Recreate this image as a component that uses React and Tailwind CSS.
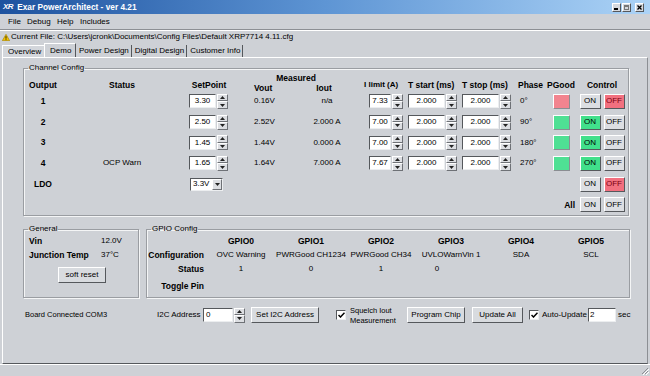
import React from "react";

const rows = [
  { n: "1", status: "", sp: "3.30", vout: "0.16V", iout: "n/a", il: "7.33", ts: "2.000", tp: "2.000", ph: "0°", pg: "bad", ctl: "off" },
  { n: "2", status: "", sp: "2.50", vout: "2.52V", iout: "2.000 A", il: "7.00", ts: "2.000", tp: "2.000", ph: "90°", pg: "good", ctl: "on" },
  { n: "3", status: "", sp: "1.45", vout: "1.44V", iout: "0.000 A", il: "7.00", ts: "2.000", tp: "2.000", ph: "180°", pg: "good", ctl: "on" },
  { n: "4", status: "OCP Warn", sp: "1.65", vout: "1.64V", iout: "7.000 A", il: "7.67", ts: "2.000", tp: "2.000", ph: "270°", pg: "good", ctl: "on" },
];

const gpio = [
  { h: "GPIO0", c: "OVC Warning", s: "1" },
  { h: "GPIO1", c: "PWRGood CH1234", s: "0" },
  { h: "GPIO2", c: "PWRGood CH34", s: "1" },
  { h: "GPIO3", c: "UVLOWarnVin 1", s: "0" },
  { h: "GPIO4", c: "SDA", s: "" },
  { h: "GPIO5", c: "SCL", s: "" },
];

function SpinBtn({ up }) {
  return (
    <div className="flex-1 flex items-center justify-center bg-[#dcdee2] border border-t-white border-l-white border-r-[#6e7176] border-b-[#6e7176]">
      <svg width="5" height="3" viewBox="0 0 5 3">
        <path d={up ? "M0 3 L2.5 0 L5 3Z" : "M0 0 L2.5 3 L5 0Z"} fill="#222" />
      </svg>
    </div>
  );
}

function Spinner() {
  return (
    <div className="flex flex-col w-[11px] h-[15px]">
      <SpinBtn up />
      <SpinBtn />
    </div>
  );
}

function Spin({ value, w }) {
  return (
    <div className="flex items-center gap-[1px]">
      <div className={`${w} h-[14px] bg-white border border-t-[#55585c] border-l-[#55585c] border-b-[#eceef0] border-r-[#eceef0] flex items-center justify-center`}>
        {value}
      </div>
      <Spinner />
    </div>
  );
}

function Btn({ children, tone }) {
  const bg =
    tone === "on"
      ? "bg-[#41e08b]"
      : tone === "off"
      ? "bg-[#f2707f] text-[#7a0010]"
      : "bg-[#dcdee2]";
  return (
    <button className={`w-[21px] h-[15px] flex items-center justify-center border border-t-white border-l-white border-r-[#55585c] border-b-[#55585c] leading-none ${bg}`}>
      {children}
    </button>
  );
}

function PGood({ ok }) {
  return (
    <div
      className={`w-[17px] h-[15px] border border-t-white border-l-white border-r-[#8a8d92] border-b-[#8a8d92] ${
        ok ? "bg-[#4fe094]" : "bg-[#f2848f]"
      }`}
    />
  );
}

function Check() {
  return (
    <div className="w-[10px] h-[10px] bg-white border border-t-[#55585c] border-l-[#55585c] border-b-[#eceef0] border-r-[#eceef0] flex items-center justify-center">
      <svg width="7" height="6" viewBox="0 0 7 6">
        <path d="M0.5 3 L2.5 5 L6.5 0.8" stroke="#000" strokeWidth="1.5" fill="none" />
      </svg>
    </div>
  );
}

function WinBtn({ children }) {
  return (
    <div className="w-[9px] h-[9px] bg-[#d6d9de] border border-t-white border-l-white border-r-[#55585c] border-b-[#55585c] flex items-center justify-center">
      {children}
    </div>
  );
}

function PushButton({ w, children }) {
  return (
    <button className={`${w} h-[16px] bg-[#d8dbdf] border border-t-white border-l-white border-r-[#55585c] border-b-[#55585c] flex items-center justify-center leading-none`}>
      {children}
    </button>
  );
}

const head = "self-end mb-[1px] leading-[10px] font-bold text-[8.5px]";

export default function App() {
  return (
    <div className="w-[650px] h-[376px] overflow-hidden bg-[#ced1d6] flex flex-col text-[8px] leading-none text-black whitespace-nowrap font-['Liberation_Sans',Arial,sans-serif]">
      {/* title bar */}
      <div className="h-[14px] shrink-0 flex items-center bg-gradient-to-r from-[#1d529f] via-[#5e95d4] to-[#acd3f6] pl-[3px] pr-[6px]">
        <span className="text-white font-bold italic text-[8px] tracking-[-0.5px]">XR</span>
        <span className="ml-[4px] text-white font-bold text-[8.3px]">Exar PowerArchitect - ver 4.21</span>
        <div className="ml-auto flex gap-[1px]">
          <WinBtn>
            <div className="w-[4px] h-[1.5px] bg-black mt-[4px] -ml-[1px]" />
          </WinBtn>
          <WinBtn>
            <div className="w-[5px] h-[5px] border border-[#777] border-t-2" />
          </WinBtn>
          <div className="w-[2px]" />
          <WinBtn>
            <svg width="5" height="5" viewBox="0 0 5 5">
              <path d="M0.5 0.5 L4.5 4.5 M4.5 0.5 L0.5 4.5" stroke="#000" strokeWidth="1.3" />
            </svg>
          </WinBtn>
        </div>
      </div>

      {/* menu */}
      <div className="h-[15px] shrink-0 flex items-center pl-[8px]">
        <span className="w-[19px]">File</span>
        <span className="w-[30px]">Debug</span>
        <span className="w-[23px]">Help</span>
        <span>Includes</span>
      </div>
      <div className="h-[2px] shrink-0 border-t border-t-[#8c8f94] border-b border-b-white" />

      {/* current file */}
      <div className="h-[12px] shrink-0 flex items-center pl-[2px]">
        <svg width="8" height="7" viewBox="0 0 8 7">
          <path d="M4 0.3 L7.7 6.7 L0.3 6.7Z" fill="#f5c400" stroke="#9a7a00" strokeWidth="0.6" />
          <rect x="3.6" y="2.2" width="0.8" height="2.5" fill="#000" />
          <rect x="3.6" y="5.3" width="0.8" height="0.8" fill="#000" />
        </svg>
        <span className="ml-[1px]">Current File: C:\Users\jcronk\Documents\Config Files\Default XRP7714 4.11.cfg</span>
      </div>

      {/* tabs */}
      <div className="h-[14px] shrink-0 flex items-end pl-[2px]">
        <div className="w-[42px] h-[12px] flex items-center pl-[5px] border-t border-l border-white bg-[#d3d6db]">Overview</div>
        <div className="w-[32px] h-[14px] flex items-center pl-[5px] border-t border-l border-white border-r border-r-[#55585c] bg-[#ced1d6]">Demo</div>
        <div className="h-[12px] flex items-center pl-[3px] pr-[2px] border-r border-r-[#55585c]">Power Design</div>
        <div className="h-[12px] flex items-center pl-[3px] pr-[2px] border-r border-r-[#55585c]">Digital Design</div>
        <div className="h-[12px] flex items-center pl-[3px] pr-[2px] border-r border-r-[#55585c]">Customer Info</div>
      </div>

      {/* tab panel */}
      <div className="flex-1 mx-[2px] border border-t-white border-l-white border-r-[#8c8f94] border-b-[#55585c] flex flex-col pl-[20px]">
        {/* channel config */}
        <fieldset className="mt-[5px] w-[606px] border border-[#9a9da2] shadow-[inset_1px_1px_0_#f4f5f6,1px_1px_0_#f4f5f6]">
          <legend className="ml-[4px] px-[1px] leading-[10px]">Channel Config</legend>
          <div className="grid grid-cols-[38px_120px_54px_60px_60px_50px_54px_54px_32px_30px_52px] grid-rows-[18px_repeat(6,20.7px)] items-center">
            <div className={`${head} text-center`}>Output</div>
            <div className={`${head} text-center`}>Status</div>
            <div className={`${head} text-center`}>SetPoint</div>
            <div className="col-span-2 self-stretch flex flex-col font-bold text-[8.5px]">
              <div className="leading-[10px] text-center">Measured</div>
              <div className="flex mt-[1px] leading-[9px]">
                <span className="w-[60px] pl-[18px]">Vout</span>
                <span className="w-[60px] text-center pr-[4px]">Iout</span>
              </div>
            </div>
            <div className={`${head} pl-[8px] text-[8px]`}>I limit (A)</div>
            <div className={`${head} pl-[2px]`}>T start (ms)</div>
            <div className={`${head} pl-[2px]`}>T stop (ms)</div>
            <div className={`${head} pl-[4px]`}>Phase</div>
            <div className={`${head} text-center`}>PGood</div>
            <div className={`${head} text-center`}>Control</div>

            {rows.map((r) => (
              <React.Fragment key={r.n}>
                <div className="text-center font-bold text-[8.5px]">{r.n}</div>
                <div className="text-center">{r.status}</div>
                <div className="pl-[7px]">
                  <Spin value={r.sp} w="w-[27px]" />
                </div>
                <div className="pl-[18px]">{r.vout}</div>
                <div className="text-center pl-[2px]">{r.iout}</div>
                <div className="pl-[13px]">
                  <Spin value={r.il} w="w-[22px]" />
                </div>
                <div className="pl-[2px]">
                  <Spin value={r.ts} w="w-[37px]" />
                </div>
                <div className="pl-[2px]">
                  <Spin value={r.tp} w="w-[37px]" />
                </div>
                <div className="pl-[6px]">{r.ph}</div>
                <div className="flex justify-center">
                  <PGood ok={r.pg === "good"} />
                </div>
                <div className="flex justify-center gap-[3px]">
                  <Btn tone={r.ctl === "on" ? "on" : ""}>ON</Btn>
                  <Btn tone={r.ctl === "off" ? "off" : ""}>OFF</Btn>
                </div>
              </React.Fragment>
            ))}

            {/* LDO */}
            <div className="text-center font-bold text-[8.5px]">LDO</div>
            <div />
            <div className="pl-[8px]">
              <div className="w-[33px] h-[13px] bg-white border border-t-[#55585c] border-l-[#55585c] border-b-[#eceef0] border-r-[#eceef0] flex items-center">
                <span className="pl-[2px] flex-1">3.3V</span>
                <div className="w-[10px] h-[11px] bg-[#dcdee2] border border-t-white border-l-white border-r-[#6e7176] border-b-[#6e7176] flex items-center justify-center">
                  <svg width="5" height="3" viewBox="0 0 5 3">
                    <path d="M0 0 L2.5 3 L5 0Z" fill="#222" />
                  </svg>
                </div>
              </div>
            </div>
            <div className="col-span-7" />
            <div className="flex justify-center gap-[3px]">
              <Btn>ON</Btn>
              <Btn tone="off">OFF</Btn>
            </div>

            {/* All */}
            <div className="col-span-9" />
            <div className="text-right pr-[1px] font-bold text-[8.5px]">All</div>
            <div className="flex justify-center gap-[3px]">
              <Btn>ON</Btn>
              <Btn>OFF</Btn>
            </div>
          </div>
        </fieldset>

        <div className="flex gap-[7px] mt-[8px]">
          {/* general */}
          <fieldset className="w-[116px] h-[74px] border border-[#9a9da2] shadow-[inset_1px_1px_0_#f4f5f6,1px_1px_0_#f4f5f6] pl-[5px]">
            <legend className="ml-[-1px] px-[1px] leading-[10px]">General</legend>
            <div className="h-[14px] flex items-center">
              <span className="w-[72px] font-bold text-[8.5px]">Vin</span>
              <span>12.0V</span>
            </div>
            <div className="h-[14px] flex items-center">
              <span className="w-[72px] font-bold text-[8.5px]">Junction Temp</span>
              <span>37°C</span>
            </div>
            <div className="mt-[5px] pl-[29px]">
              <PushButton w="w-[48px]">soft reset</PushButton>
            </div>
          </fieldset>

          {/* gpio */}
          <fieldset className="w-[484px] h-[74px] border border-[#9a9da2] shadow-[inset_1px_1px_0_#f4f5f6,1px_1px_0_#f4f5f6]">
            <legend className="ml-[4px] px-[1px] leading-[10px]">GPIO Config</legend>
            <div className="grid grid-cols-[59px_repeat(6,70px)] grid-rows-[14px_14px_14px_20px] items-center">
              <div />
              {gpio.map((g) => (
                <div key={g.h} className="text-center font-bold text-[8.5px]">{g.h}</div>
              ))}
              <div className="text-right pr-[2px] font-bold text-[8.5px]">Configuration</div>
              {gpio.map((g) => (
                <div key={g.h} className="text-center">{g.c}</div>
              ))}
              <div className="text-right pr-[2px] font-bold text-[8.5px]">Status</div>
              {gpio.map((g, i) => (
                <div key={g.h} className={i === 3 ? "text-center pr-[28px]" : "text-center"}>{g.s}</div>
              ))}
              <div className="text-right pr-[2px] font-bold text-[8.5px]">Toggle Pin</div>
            </div>
          </fieldset>
        </div>

        {/* bottom controls */}
        <div className="mt-[7px] h-[20px] flex items-center">
          <span className="w-[134px] pl-[2px] text-[7.5px]">Board Connected COM3</span>
          <span className="w-[46px]">I2C Address</span>
          <div className="w-[30px] h-[14px] bg-white border border-t-[#55585c] border-l-[#55585c] border-b-[#eceef0] border-r-[#eceef0] flex items-center pl-[2px]">0</div>
          <div className="ml-[1px]">
            <Spinner />
          </div>
          <div className="ml-[6px]">
            <PushButton w="w-[68px]">Set I2C Address</PushButton>
          </div>
          <div className="ml-[17px]">
            <Check />
          </div>
          <div className="ml-[4px] w-[54px] flex flex-col gap-[1px] text-[7.5px] leading-[9px]">
            <span>Squelch Iout</span>
            <span>Measurement</span>
          </div>
          <div className="ml-[3px]">
            <PushButton w="w-[58px]">Program Chip</PushButton>
          </div>
          <div className="ml-[7px]">
            <PushButton w="w-[51px]">Update All</PushButton>
          </div>
          <div className="ml-[6px]">
            <Check />
          </div>
          <span className="ml-[3px] w-[46px]">Auto-Update</span>
          <div className="w-[28px] h-[14px] bg-white border border-t-[#55585c] border-l-[#55585c] border-b-[#eceef0] border-r-[#eceef0] flex items-center pl-[1px]">2</div>
          <span className="ml-[2px]">sec</span>
        </div>
      </div>

      {/* status bar */}
      <div className="h-[12px] shrink-0 flex items-end justify-end border-t border-t-white pr-[1px] pb-[1px]">
        <svg width="9" height="9" viewBox="0 0 9 9">
          <path d="M8 2 L2 8 M8 5 L5 8" stroke="#8c8f94" strokeWidth="1" />
          <path d="M9 3 L3 9 M9 6 L6 9" stroke="#fff" strokeWidth="1" />
        </svg>
      </div>
    </div>
  );
}
